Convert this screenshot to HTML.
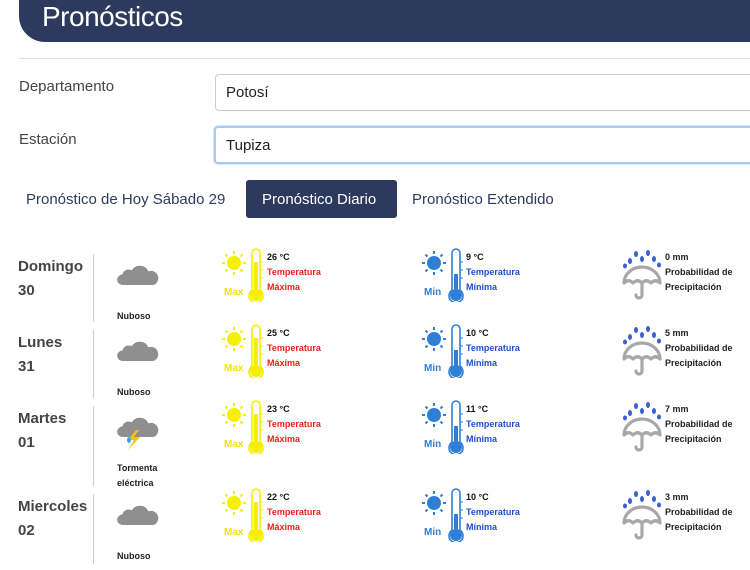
<!DOCTYPE html>
<html><head><meta charset="utf-8">
<style>
*{margin:0;padding:0;box-sizing:border-box}
body{width:750px;height:570px;overflow:hidden;background:#fff;font-family:"Liberation Sans",sans-serif;position:relative;color:#333}
.a{position:absolute}
.hdr{left:19px;top:-10px;width:760px;height:52px;background:#2d3a5e;border-radius:0 0 0 26px}
.hdr span{position:absolute;left:23px;top:11px;color:#fff;font-size:28px;letter-spacing:-0.5px}
.sep{left:19px;top:58px;width:731px;height:1px;background:#ddd}
.lbl{font-size:15px;color:#444}
.inp{height:37px;border:1px solid #ccc;border-radius:4px;width:560px;font-size:15px;padding:9px 10px;color:#222}
.tab{font-size:15px;color:#2d3a5e}
.day{font-size:15px;font-weight:bold;color:#444;line-height:24px;left:18px}
.vl{left:93px;width:1px;background:#ccc}
.cond{font-size:9px;font-weight:bold;color:#222;line-height:15px;left:117px}
.t{font-size:9px;font-weight:bold;line-height:15px}
.mx{font-size:10px;font-weight:bold;color:#f2e600}
.mn{font-size:10px;font-weight:bold;color:#2f7fd6}
</style></head><body>
<svg width="0" height="0" style="position:absolute">
<defs>
<symbol id="sunY" viewBox="0 0 26 26"><circle cx="13" cy="13" r="7" fill="#f5ef00"/><g stroke="#f5ef00" stroke-width="2"><line x1="13" y1="1" x2="13" y2="4"/><line x1="13" y1="22" x2="13" y2="25"/><line x1="1" y1="13" x2="4" y2="13"/><line x1="22" y1="13" x2="25" y2="13"/><line x1="4.5" y1="4.5" x2="6.5" y2="6.5"/><line x1="19.5" y1="19.5" x2="21.5" y2="21.5"/><line x1="4.5" y1="21.5" x2="6.5" y2="19.5"/><line x1="19.5" y1="6.5" x2="21.5" y2="4.5"/></g></symbol>
<symbol id="sunB" viewBox="0 0 26 26"><circle cx="13" cy="13" r="7" fill="#2f7fd6"/><g stroke="#2f7fd6" stroke-width="2"><line x1="13" y1="1" x2="13" y2="4"/><line x1="13" y1="22" x2="13" y2="25"/><line x1="1" y1="13" x2="4" y2="13"/><line x1="22" y1="13" x2="25" y2="13"/><line x1="4.5" y1="4.5" x2="6.5" y2="6.5"/><line x1="19.5" y1="19.5" x2="21.5" y2="21.5"/><line x1="4.5" y1="21.5" x2="6.5" y2="19.5"/><line x1="19.5" y1="6.5" x2="21.5" y2="4.5"/></g></symbol>
<symbol id="thY" viewBox="0 0 18 54"><path d="M5 42V5a4 4 0 0 1 8 0v37a7 7 0 1 1-8 0z" fill="#fff" stroke="#f5ef00" stroke-width="1.6"/><rect x="7" y="14" width="4" height="30" fill="#f5ef00"/><circle cx="9" cy="47" r="6" fill="#f5ef00"/><g stroke="#f5ef00" stroke-width="1"><line x1="13" y1="14" x2="16" y2="14"/><line x1="13" y1="22" x2="16" y2="22"/><line x1="13" y1="30" x2="16" y2="30"/></g></symbol>
<symbol id="thB" viewBox="0 0 18 54"><path d="M5 42V5a4 4 0 0 1 8 0v37a7 7 0 1 1-8 0z" fill="#fff" stroke="#2f7fd6" stroke-width="1.6"/><rect x="7" y="26" width="4" height="18" fill="#2f7fd6"/><circle cx="9" cy="47" r="6" fill="#2f7fd6"/><g stroke="#2f7fd6" stroke-width="1"><line x1="13" y1="14" x2="16" y2="14"/><line x1="13" y1="22" x2="16" y2="22"/><line x1="13" y1="30" x2="16" y2="30"/></g></symbol>
<symbol id="cloud" viewBox="0 0 40 24"><path d="M5 23a5 5 0 0 1 0-10 6 6 0 0 1 9-4 9 9 0 0 1 16 1 6.5 6.5 0 0 1 5 13z" fill="#8f8f8f"/></symbol>
<symbol id="umb" viewBox="0 0 40 52"><g fill="#3a5fd0"><ellipse cx="8" cy="12" rx="2" ry="3"/><ellipse cx="14" cy="5" rx="2" ry="3"/><ellipse cx="20" cy="10" rx="2" ry="3"/><ellipse cx="26" cy="4" rx="2" ry="3"/><ellipse cx="32" cy="10" rx="2" ry="3"/><ellipse cx="3" cy="17" rx="2" ry="2.5"/><ellipse cx="37" cy="16" rx="2" ry="2.5"/></g><path d="M2 34a18 16 0 0 1 36 0c-3-3-6-3-9 0-3-3-6-3-9 0-3-3-6-3-9 0-3-3-6-3-9 0z" fill="none" stroke="#a8a8a8" stroke-width="3.2" stroke-linejoin="round"/><path d="M20 34v12a3 3 0 0 1-6 0" fill="none" stroke="#a8a8a8" stroke-width="3.2" stroke-linecap="round"/></symbol>
</defs></svg>

<div class="a hdr"><span>Pronósticos</span></div>
<div class="a sep"></div>
<div class="a lbl" style="left:19px;top:78px">Departamento</div>
<div class="a inp" style="left:215px;top:74px">Potosí</div>
<div class="a lbl" style="left:19px;top:131px">Estación</div>
<div class="a inp" style="left:214px;top:126px;height:38px;border:2px solid #a9c9f2;box-shadow:0 0 0 1px #d8e6fa">Tupiza</div>
<div class="a tab" style="left:26px;top:191px">Pronóstico de Hoy Sábado 29</div>
<div class="a" style="left:246px;top:180px;width:151px;height:38px;background:#2d3a5e;border-radius:3px"></div>
<div class="a tab" style="left:262px;top:191px;color:#fff">Pronóstico Diario</div>
<div class="a tab" style="left:412px;top:191px">Pronóstico Extendido</div>

<!-- Row 1 T=250 -->
<div class="a day" style="top:255px">Domingo<br>30</div>
<div class="a vl" style="top:254px;height:68px"></div>
<svg class="a" style="left:117px;top:261px" width="42" height="25"><use href="#cloud"/></svg>
<div class="a cond" style="top:309px">Nuboso</div>
<svg class="a" style="left:221px;top:250px" width="26" height="26"><use href="#sunY"/></svg>
<svg class="a" style="left:247px;top:248px" width="18" height="54"><use href="#thY"/></svg>
<div class="a mx" style="left:224px;top:287px">Max</div>
<div class="a t" style="left:267px;top:250px"><span style="color:#111">26 °C</span><br><span style="color:#e0261b">Temperatura<br>Máxima</span></div>
<svg class="a" style="left:421px;top:250px" width="26" height="26"><use href="#sunB"/></svg>
<svg class="a" style="left:447px;top:248px" width="18" height="54"><use href="#thB"/></svg>
<div class="a mn" style="left:424px;top:287px">Min</div>
<div class="a t" style="left:466px;top:250px"><span style="color:#111">9 °C</span><br><span style="color:#1f4fc9">Temperatura<br>Mínima</span></div>
<svg class="a" style="left:622px;top:249px" width="40" height="52"><use href="#umb"/></svg>
<div class="a t" style="left:665px;top:250px;color:#222">0 mm<br>Probabilidad de<br>Precipitación</div>

<!-- Row 2 T=326 -->
<div class="a day" style="top:331px">Lunes<br>31</div>
<div class="a vl" style="top:330px;height:68px"></div>
<svg class="a" style="left:117px;top:337px" width="42" height="25"><use href="#cloud"/></svg>
<div class="a cond" style="top:385px">Nuboso</div>
<svg class="a" style="left:221px;top:326px" width="26" height="26"><use href="#sunY"/></svg>
<svg class="a" style="left:247px;top:324px" width="18" height="54"><use href="#thY"/></svg>
<div class="a mx" style="left:224px;top:363px">Max</div>
<div class="a t" style="left:267px;top:326px"><span style="color:#111">25 °C</span><br><span style="color:#e0261b">Temperatura<br>Máxima</span></div>
<svg class="a" style="left:421px;top:326px" width="26" height="26"><use href="#sunB"/></svg>
<svg class="a" style="left:447px;top:324px" width="18" height="54"><use href="#thB"/></svg>
<div class="a mn" style="left:424px;top:363px">Min</div>
<div class="a t" style="left:466px;top:326px"><span style="color:#111">10 °C</span><br><span style="color:#1f4fc9">Temperatura<br>Mínima</span></div>
<svg class="a" style="left:622px;top:325px" width="40" height="52"><use href="#umb"/></svg>
<div class="a t" style="left:665px;top:326px;color:#222">5 mm<br>Probabilidad de<br>Precipitación</div>

<!-- Row 3 T=402 -->
<div class="a day" style="top:407px">Martes<br>01</div>
<div class="a vl" style="top:406px;height:80px"></div>
<svg class="a" style="left:117px;top:413px" width="42" height="25"><use href="#cloud"/></svg>
<svg class="a" style="left:124px;top:430px" width="22" height="20"><path d="M12 0l-8 10h6l-6 10 12-13h-6l5-7z" fill="#f3c20f"/><ellipse cx="5" cy="10" rx="2" ry="3" fill="#3aa0e8"/></svg>
<div class="a cond" style="top:461px">Tormenta<br>eléctrica</div>
<svg class="a" style="left:221px;top:402px" width="26" height="26"><use href="#sunY"/></svg>
<svg class="a" style="left:247px;top:400px" width="18" height="54"><use href="#thY"/></svg>
<div class="a mx" style="left:224px;top:439px">Max</div>
<div class="a t" style="left:267px;top:402px"><span style="color:#111">23 °C</span><br><span style="color:#e0261b">Temperatura<br>Máxima</span></div>
<svg class="a" style="left:421px;top:402px" width="26" height="26"><use href="#sunB"/></svg>
<svg class="a" style="left:447px;top:400px" width="18" height="54"><use href="#thB"/></svg>
<div class="a mn" style="left:424px;top:439px">Min</div>
<div class="a t" style="left:466px;top:402px"><span style="color:#111">11 °C</span><br><span style="color:#1f4fc9">Temperatura<br>Mínima</span></div>
<svg class="a" style="left:622px;top:401px" width="40" height="52"><use href="#umb"/></svg>
<div class="a t" style="left:665px;top:402px;color:#222">7 mm<br>Probabilidad de<br>Precipitación</div>

<!-- Row 4 T=490 -->
<div class="a day" style="top:495px">Miercoles<br>02</div>
<div class="a vl" style="top:494px;height:70px"></div>
<svg class="a" style="left:117px;top:501px" width="42" height="25"><use href="#cloud"/></svg>
<div class="a cond" style="top:549px">Nuboso</div>
<svg class="a" style="left:221px;top:490px" width="26" height="26"><use href="#sunY"/></svg>
<svg class="a" style="left:247px;top:488px" width="18" height="54"><use href="#thY"/></svg>
<div class="a mx" style="left:224px;top:527px">Max</div>
<div class="a t" style="left:267px;top:490px"><span style="color:#111">22 °C</span><br><span style="color:#e0261b">Temperatura<br>Máxima</span></div>
<svg class="a" style="left:421px;top:490px" width="26" height="26"><use href="#sunB"/></svg>
<svg class="a" style="left:447px;top:488px" width="18" height="54"><use href="#thB"/></svg>
<div class="a mn" style="left:424px;top:527px">Min</div>
<div class="a t" style="left:466px;top:490px"><span style="color:#111">10 °C</span><br><span style="color:#1f4fc9">Temperatura<br>Mínima</span></div>
<svg class="a" style="left:622px;top:489px" width="40" height="52"><use href="#umb"/></svg>
<div class="a t" style="left:665px;top:490px;color:#222">3 mm<br>Probabilidad de<br>Precipitación</div>
</body></html>
